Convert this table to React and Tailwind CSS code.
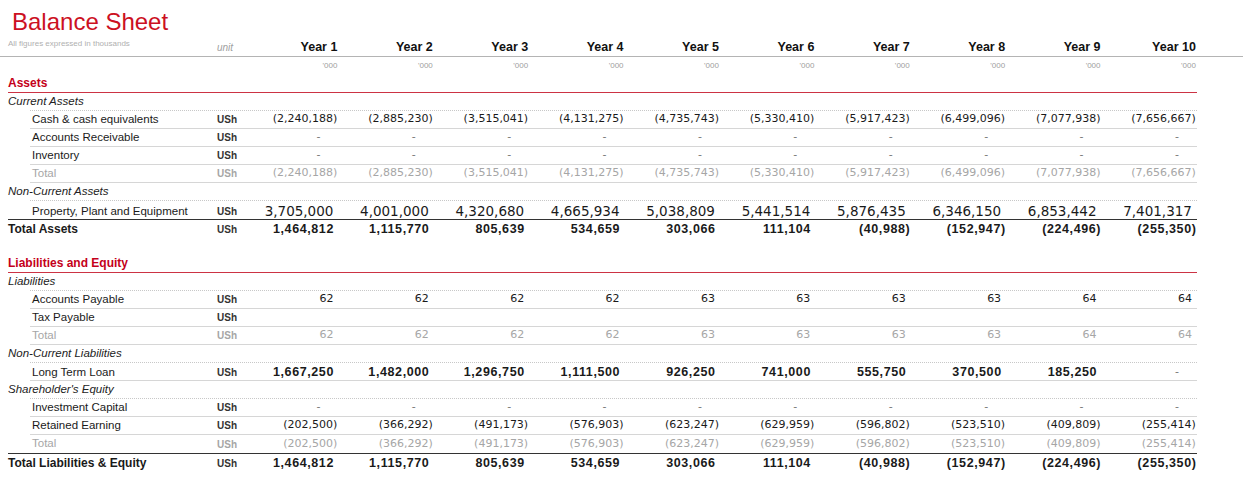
import React from "react";

const COLS = "grid grid-cols-[187px_25px_repeat(10,95.4px)] items-center";
const COLS_WIDE = "grid grid-cols-[209px_25px_repeat(10,95.4px)] items-center";
const NUM = "font-['DejaVu_Sans',Verdana,sans-serif]";
const NUMB = "font-['Liberation_Sans',Arial,sans-serif] font-bold text-[12.5px] tracking-[0.6px]";

const dashes = Array(10).fill("-");
const cash = ["(2,240,188)", "(2,885,230)", "(3,515,041)", "(4,131,275)", "(4,735,743)", "(5,330,410)", "(5,917,423)", "(6,499,096)", "(7,077,938)", "(7,656,667)"];
const ppe = ["3,705,000", "4,001,000", "4,320,680", "4,665,934", "5,038,809", "5,441,514", "5,876,435", "6,346,150", "6,853,442", "7,401,317"];
const totalAssets = ["1,464,812", "1,115,770", "805,639", "534,659", "303,066", "111,104", "(40,988)", "(152,947)", "(224,496)", "(255,350)"];
const ap = ["62", "62", "62", "62", "63", "63", "63", "63", "64", "64"];
const ltl = ["1,667,250", "1,482,000", "1,296,750", "1,111,500", "926,250", "741,000", "555,750", "370,500", "185,250", "-"];
const re = ["(202,500)", "(366,292)", "(491,173)", "(576,903)", "(623,247)", "(629,959)", "(596,802)", "(523,510)", "(409,809)", "(255,414)"];

function Val({ v, cls = "", bold }) {
  if (!v) return <div />;
  let pad = "pr-[4px]";
  if (v.startsWith("(")) pad = "pr-0";
  if (v === "-") {
    return <div className={`text-right pr-[17px] ${NUM} text-[11px] text-[#777]`}>-</div>;
  }
  return <div className={`text-right whitespace-nowrap ${pad} ${cls} ${bold ? "-mr-[0.6px]" : ""}`}>{v}</div>;
}

function SubHeader({ label }) {
  return (
    <div className={`ml-[30px] w-[1167px] h-[18px] border-b border-dotted border-[#c8c8c8] ${COLS}`}>
      <div className="-ml-[22px] italic text-[11.5px] text-[#222] whitespace-nowrap">{label}</div>
    </div>
  );
}

function Row({ label, values, gray, big, bold, last }) {
  const tc = gray ? "text-[#a6a6a6]" : "text-[#1a1a1a]";
  const numCls = bold ? NUMB : `${NUM} ${big ? "text-[13.5px]" : "text-[11px]"}`;
  return (
    <div className={`ml-[30px] w-[1167px] h-[18px] ${last ? "" : "border-b border-[#d6d6d6]"} ${COLS}`}>
      <div className={`pl-[2px] text-[11.5px] whitespace-nowrap ${tc}`}>{label}</div>
      <div className={`text-[10px] font-bold ${gray ? "text-[#a6a6a6]" : "text-[#333]"}`}>USh</div>
      {(values || Array(10).fill("")).map((v, i) => (
        <Val key={i} v={v} bold={bold} cls={`${numCls} ${tc}`} />
      ))}
    </div>
  );
}

function TotalRow({ label, values }) {
  return (
    <div className={`ml-[8px] w-[1189px] h-[18px] border-t border-[#333] ${COLS_WIDE} pr-[1px]`}>
      <div className="text-[12px] font-bold text-[#1a1a1a] whitespace-nowrap">{label}</div>
      <div className="text-[10px] font-bold text-[#333]">USh</div>
      {values.map((v, i) => (
        <Val key={i} v={v} bold cls={`${NUMB} text-[#1a1a1a]`} />
      ))}
    </div>
  );
}

function Section({ label }) {
  return (
    <div className="ml-[8px] w-[1189px] h-[19px] border-b border-[#cc3344] flex items-center">
      <span className="text-[12px] font-bold text-[#c4001a] leading-[14px]">{label}</span>
    </div>
  );
}

export default function App() {
  return (
    <div className="w-[1243px] h-[483px] bg-white overflow-hidden font-['Liberation_Sans',Arial,sans-serif]">
      <div className="pl-[12px] pt-[7px] h-[38px] text-[24px] leading-[30px] text-[#cc1022]">Balance Sheet</div>

      <div className={`h-[19px] border-b border-[#b4b4b4] pl-[8px] ${COLS_WIDE}`}>
        <div className="self-start pt-[1px] text-[8px] leading-[10px] text-[#b0b0b0] whitespace-nowrap">
          All figures expressed in thousands
        </div>
        <div className="italic text-[10px] text-[#a0a0a0]">unit</div>
        {Array.from({ length: 10 }, (_, i) => (
          <div key={i} className="text-right text-[12.5px] font-bold text-[#111] leading-[14px]">Year {i + 1}</div>
        ))}
      </div>

      <div className={`h-[17px] pl-[8px] ${COLS_WIDE}`}>
        <div />
        <div />
        {Array.from({ length: 10 }, (_, i) => (
          <div key={i} className="text-right text-[8px] text-[#a0a0a0]">'000</div>
        ))}
      </div>

      <Section label="Assets" />
      <SubHeader label="Current Assets" />
      <Row label="Cash & cash equivalents" values={cash} />
      <Row label="Accounts Receivable" values={dashes} />
      <Row label="Inventory" values={dashes} />
      <Row label="Total" values={cash} gray />
      <SubHeader label="Non-Current Assets" />
      <Row label="Property, Plant and Equipment" values={ppe} big last />
      <TotalRow label="Total Assets" values={totalAssets} />

      <div className="mt-[17px]">
        <Section label="Liabilities and Equity" />
      </div>
      <SubHeader label="Liabilities" />
      <Row label="Accounts Payable" values={ap} />
      <Row label="Tax Payable" />
      <Row label="Total" values={ap} gray />
      <SubHeader label="Non-Current Liabilities" />
      <Row label="Long Term Loan" values={ltl} bold />
      <SubHeader label="Shareholder's Equity" />
      <Row label="Investment Capital" values={dashes} />
      <Row label="Retained Earning" values={re} />
      <Row label="Total" values={re} gray last />
      <TotalRow label="Total Liabilities & Equity" values={totalAssets} />
    </div>
  );
}
